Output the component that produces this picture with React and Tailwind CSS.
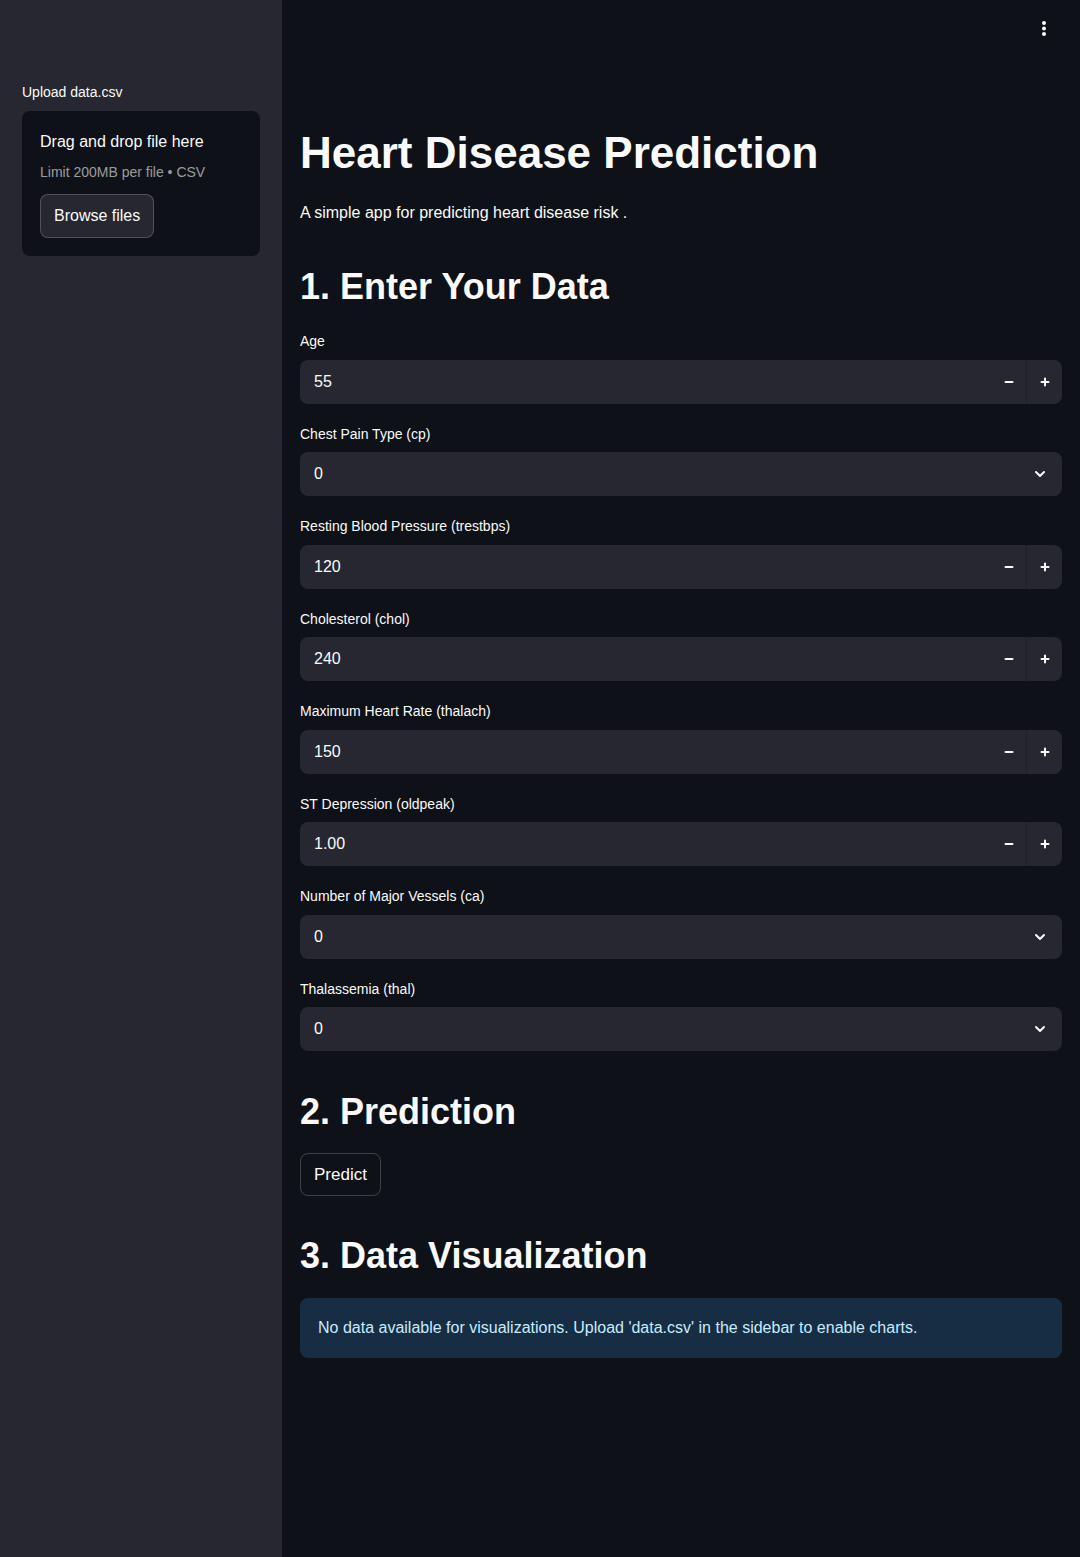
import { ChevronDown, Minus, Plus } from "lucide-react";

const fields = [
  { label: "Age", value: "55", type: "number" },
  { label: "Chest Pain Type (cp)", value: "0", type: "select" },
  { label: "Resting Blood Pressure (trestbps)", value: "120", type: "number" },
  { label: "Cholesterol (chol)", value: "240", type: "number" },
  { label: "Maximum Heart Rate (thalach)", value: "150", type: "number" },
  { label: "ST Depression (oldpeak)", value: "1.00", type: "number" },
  { label: "Number of Major Vessels (ca)", value: "0", type: "select" },
  { label: "Thalassemia (thal)", value: "0", type: "select" },
];

const Field = ({ label, value, type }) => (
  <div>
    <label className="block h-5 text-sm leading-5 mb-[8.5px]">{label}</label>
    {type === "number" ? (
      <div className="flex h-[44px] rounded-lg bg-[#262730] overflow-hidden">
        <div className="flex-1 flex items-center pl-[14px] text-base">{value}</div>
        <button className="w-[35px] flex items-center justify-center">
          <Minus size={12} strokeWidth={4} />
        </button>
        <div className="w-px bg-[#1f2028]" />
        <button className="w-[35px] flex items-center justify-center">
          <Plus size={12} strokeWidth={4} />
        </button>
      </div>
    ) : (
      <div className="flex items-center justify-between h-[44px] rounded-lg bg-[#262730] pl-[14px] pr-[14px] text-base">
        <span>{value}</span>
        <ChevronDown size={16} strokeWidth={3} />
      </div>
    )}
  </div>
);

export default function App() {
  return (
    <div className="flex min-h-[1557px] bg-[#0e1117] text-[#fafafa] font-['Liberation_Sans',sans-serif]">
      {/* Sidebar */}
      <aside className="w-[282px] shrink-0 bg-[#262730] px-[22px] pt-[82px]">
        <p className="text-sm leading-5">Upload data.csv</p>
        <div className="mt-[9px] rounded-lg bg-[#0e1117] px-[18px] pt-[19px] pb-[18px]">
          <p className="text-base leading-6">Drag and drop file here</p>
          <p className="mt-[8px] text-sm leading-5 text-[#fafafa]/60">Limit 200MB per file • CSV</p>
          <button className="mt-[12px] h-[44px] px-[13px] rounded-lg bg-[#262730] border border-white/20 text-base">
            Browse files
          </button>
        </div>
      </aside>

      {/* Main */}
      <main className="relative flex-1 px-[18px] pt-[127px]">
        <button className="absolute top-[18px] right-[28px] text-[#fafafa]">
          <svg width="16" height="20" viewBox="0 0 16 20" fill="currentColor">
            <circle cx="8" cy="5" r="2" />
            <circle cx="8" cy="10.5" r="2" />
            <circle cx="8" cy="16" r="2" />
          </svg>
        </button>

        <h1 className="text-[44px] leading-[52px] font-bold">Heart Disease Prediction</h1>
        <p className="mt-[22px] text-base leading-6">A simple app for predicting heart disease risk .</p>

        <h2 className="mt-[40px] text-[36px] leading-[44px] font-semibold">1. Enter Your Data</h2>
        <div className="mt-[22px] flex flex-col gap-[20px]">
          {fields.map((f) => (
            <Field key={f.label} {...f} />
          ))}
        </div>

        <h2 className="mt-[39px] text-[36px] leading-[44px] font-semibold">2. Prediction</h2>
        <button className="mt-[19px] h-[43px] px-[13px] rounded-lg border border-white/20 text-[17px]">
          Predict
        </button>

        <h2 className="mt-[38px] text-[36px] leading-[44px] font-semibold">3. Data Visualization</h2>
        <div className="mt-[20px] h-[60px] flex items-center px-[18px] rounded-lg bg-[#172d43] text-[#c7ebff] text-base">
          No data available for visualizations. Upload 'data.csv' in the sidebar to enable charts.
        </div>
      </main>
    </div>
  );
}
